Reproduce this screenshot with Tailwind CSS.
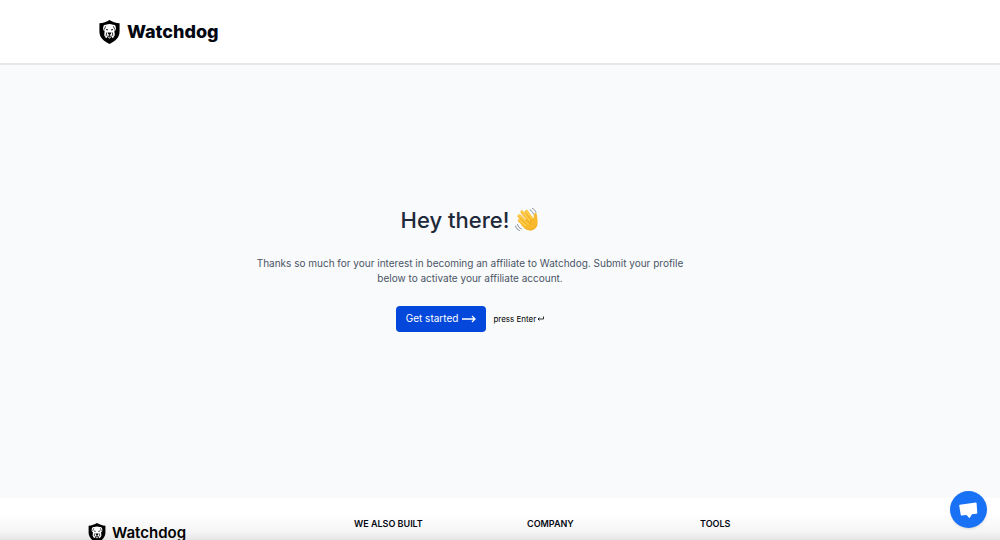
<!DOCTYPE html>
<html lang="en">
<head>
    <meta charset="UTF-8">
    <meta name="viewport" content="width=device-width, initial-scale=1.0">
    <script src="https://cdn.jsdelivr.net/npm/@tailwindcss/browser@4"></script>
    <title>Watchdog affiliates</title>
</head>
<body class="flex h-screen flex-col overflow-hidden bg-white font-[Inter,sans-serif] text-gray-950">
    <!-- shield logo, shared by header and footer -->
    <svg class="hidden" aria-hidden="true">
        <symbol id="shield" viewBox="0 0 42 50">
            <path fill="#000" d="M21 0C15 4 8 6 0 7v17c0 12 8 20 21 26 13-6 21-14 21-26V7C34 6 27 4 21 0z"/>
            <path fill="#fff" d="M14 10c4-2 10-2 14 0 4-1 6 2 6 5 1 4 0 6-2 8l-1-2 1 11-4 6-3-3-4 4-4-4-3 3-4-6 1-11-1 2c-2-2-3-4-2-8 0-3 2-6 6-5z"/>
            <path fill="none" stroke="#000" stroke-width="1.6" d="M13 13l-3 7M29 13l3 7M15 26l-1 7M27 26l1 7M21 28v5M15 32c2 3 5 2 6 0 1 2 4 3 6 0"/>
            <path fill="#000" d="M17 26h8l-1 3-3 2-3-2zM14 19l4 1-1 2-3-1zM28 19l-4 1 1 2 3-1zM18 34h6l-3 3z"/>
        </symbol>
    </svg>

    <header class="border-b-2 border-gray-200 bg-white pl-[99px]">
        <a href="#" class="flex h-[63px] items-center gap-[7px] text-lg font-extrabold">
            <svg class="h-6 w-[21px]"><use href="#shield"/></svg>
            <span>Watchdog</span>
        </a>
    </header>

    <main class="flex flex-1 flex-col items-center justify-center bg-gray-50 pr-[60px] pb-7">
        <h1 class="flex items-center gap-1.5 text-[22px] leading-8 font-medium text-gray-800">
            Hey there!
            <svg class="size-6" viewBox="0 0 48 48" role="img" aria-label="Waving hand">
                <path fill="none" stroke="#f9b92d" stroke-width="6.5" stroke-linecap="round" d="M9 25l13 12M8 16l18 17M14 8l16 18M23 7l12 17"/>
                <path fill="#f9b92d" d="M13 30l17-14 7 5c2-3-1-7 2-10 2-2 5 0 5 4 0 4 2 10 1 17-1 8-7 13-15 13-6 0-12-5-17-10z"/>
                <path fill="none" stroke="#ffd24f" stroke-width="3" stroke-linecap="round" d="M9 24l12 11M8 15l18 17M14 7l16 18M23 6l11 15"/>
                <path fill="none" stroke="#e39a1c" stroke-width="1" stroke-linecap="round" d="M11 20l12 11M12 13l16 16M19 9l13 15M36 22c-5 2-6 7-4 11M18 39c7 7 20 7 25-5"/>
                <path fill="none" stroke="#6b7280" stroke-width="1.6" stroke-linecap="round" d="M30 4c4 2 6 5 7 8M35 1c4 2 6 5 7 8M5 33c1 5 4 7 8 9M1 36c1 5 4 7 8 9"/>
            </svg>
        </h1>
        <p class="mt-5 w-[430px] text-center text-[10px] leading-[15px] text-gray-600">
            Thanks so much for your interest in becoming an affiliate to Watchdog. Submit your profile below to activate your affiliate account.
        </p>
        <div class="mt-5 flex items-center gap-[7px]">
            <button type="button" class="flex h-[26px] items-center gap-1 rounded bg-[#0348db] px-2.5 text-[10px] text-white">
                Get started
                <svg class="h-2 w-3.5" viewBox="0 0 14 8" fill="none" stroke="currentColor" stroke-width="1.3"><path d="M0 4h13M10 1l3 3-3 3"/></svg>
            </button>
            <span class="flex items-center text-[8px] text-black">
                press Enter
                <svg class="ml-px h-2 w-[7px]" viewBox="0 0 7 8" fill="none" stroke="currentColor" stroke-width=".8"><path d="M6.500 1.500V4H1M2.500 2.500L1 4l1.500 1.500"/></svg>
            </span>
        </div>
    </main>

    <footer class="h-[42px] shrink-0 bg-linear-to-b from-white from-40% via-neutral-100 via-80% to-neutral-200 pl-[88px]">
        <div class="flex items-start pt-[18px]">
            <a href="#" class="mt-[7px] flex w-[266px] items-center gap-1.5 text-[15px] leading-5 font-semibold text-black">
                <svg class="h-5 w-[18px]"><use href="#shield"/></svg>
                <span>Watchdog</span>
            </a>
            <h2 class="w-[173px] text-[9px] leading-4 font-semibold">WE ALSO BUILT</h2>
            <h2 class="w-[173px] text-[9px] leading-4 font-semibold">COMPANY</h2>
            <h2 class="text-[9px] leading-4 font-semibold">TOOLS</h2>
        </div>
    </footer>

    <button type="button" aria-label="Open chat" class="fixed right-[13px] bottom-3 flex size-[37px] items-center justify-center rounded-full bg-[#1972f5] text-white shadow-sm">
        <svg class="size-5" viewBox="0 0 20 20" fill="currentColor"><path d="M.8 4.800l16-2.200q.7 0 .8.700l.7 9.700q0 .7-.7.800l-4.600.4-2.500 4-3-3.300-5 .5q-.7 0-.8-.7L.200 5.500q0-.6.6-.7z"/></svg>
    </button>
</body>
</html>
